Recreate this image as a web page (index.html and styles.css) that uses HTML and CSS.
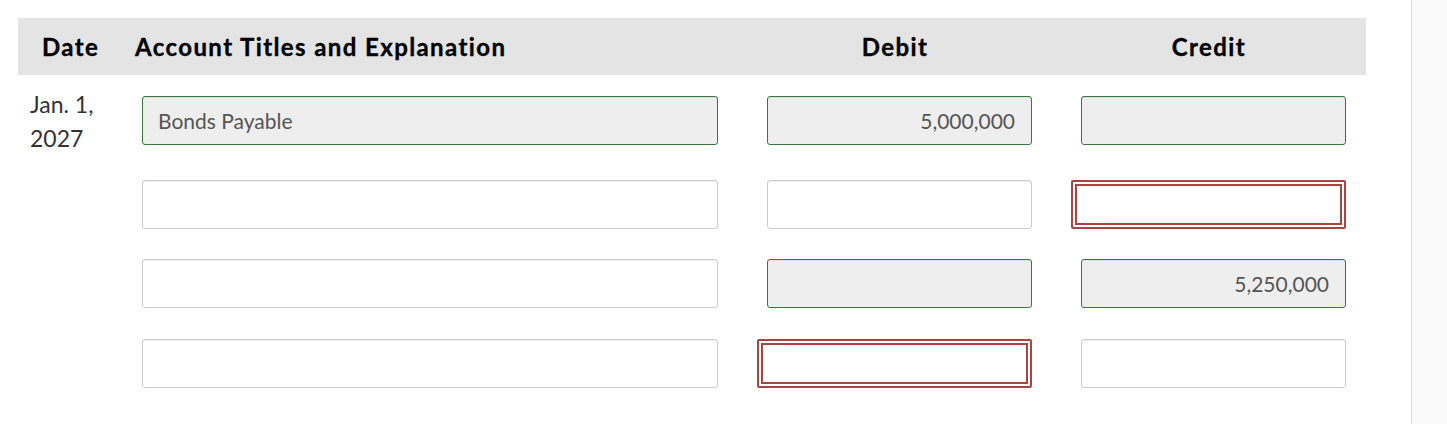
FILE: index.html
```html
<!DOCTYPE html>
<html lang="en">
<head>
<meta charset="utf-8">
<title>Journal Entry</title>
<link rel="stylesheet" href="styles.css">
</head>
<body>
<div class="page">
  <main class="main">
    <div class="journal">
      <div class="jrow head">
        <div class="h-date">Date</div>
        <div class="h-acct">Account Titles and Explanation</div>
        <div class="h-num">Debit</div>
        <div class="h-num">Credit</div>
      </div>
      <div class="jrow first">
        <div class="date">Jan.&nbsp;1, 2027</div>
        <div class="field ok">Bonds Payable</div>
        <div class="field ok num">5,000,000</div>
        <div class="field ok num"></div>
      </div>
      <div class="jrow">
        <div class="date"></div>
        <div class="field"></div>
        <div class="field"></div>
        <div class="field bad"></div>
      </div>
      <div class="jrow">
        <div class="date"></div>
        <div class="field"></div>
        <div class="field ok num"></div>
        <div class="field ok num">5,250,000</div>
      </div>
      <div class="jrow">
        <div class="date"></div>
        <div class="field"></div>
        <div class="field bad"></div>
        <div class="field"></div>
      </div>
    </div>
  </main>
  <aside class="side"></aside>
</div>
</body>
</html>
```

FILE: styles.css
```css
html, body {
  margin: 0;
  padding: 0;
  background: #fff;
  height: 100%;
}
body {
  font-family: Lato, "Noto Sans", sans-serif;
  overflow: hidden;
}
.page {
  display: flex;
  height: 424px;
}
.main {
  width: 1411px;
  flex: none;
  padding: 18px 0 0 18px;
  box-sizing: border-box;
}
.side {
  flex: 1;
  background: #f9f9f9;
  border-left: 1px solid #dcdcdc;
}
.journal {
  width: 1348px;
}
.jrow {
  display: grid;
  grid-template-columns: 63px 576px 265px 265px;
  column-gap: 49px;
  padding: 15px 20px 15.5px 12px;
  align-items: start;
}
.jrow.head {
  background: #e4e4e4;
  height: 57px;
  padding-top: 0;
  padding-bottom: 0;
  align-items: center;
  box-sizing: border-box;
  margin-bottom: 6px;
  font-weight: 700;
  font-size: 24px;
  letter-spacing: 1.4px;
  -webkit-text-stroke: 0.35px #000;
  color: #000;
}
.h-date {
  padding-left: 12px;
  white-space: nowrap;
}
.h-acct {
  margin-left: -7px;
  white-space: nowrap;
}
.h-num {
  text-align: center;
  padding-right: 9px;
}
.date {
  font-size: 23px;
  line-height: 34px;
  color: #333;
}
.first .date {
  margin: -9.5px 0 -5.5px;
}
.field {
  height: 49px;
  box-sizing: border-box;
  border: 1px solid #ccc;
  border-radius: 3px;
  background: #fff;
  box-shadow: inset 0 1px 1px rgba(0,0,0,0.075);
  font-size: 21px;
  color: #555;
  line-height: 47px;
  padding: 0 16px 0 15px;
  white-space: nowrap;
}
.field.ok {
  background: #eee;
  border-color: #3c763d;
}
.field.num {
  text-align: right;
}
.field.bad {
  margin-left: -10px;
  border: 2px solid #a94442;
  border-radius: 2px;
  box-shadow: inset 0 0 0 2px #fff, inset 0 0 0 4px #a94442;
}
```
